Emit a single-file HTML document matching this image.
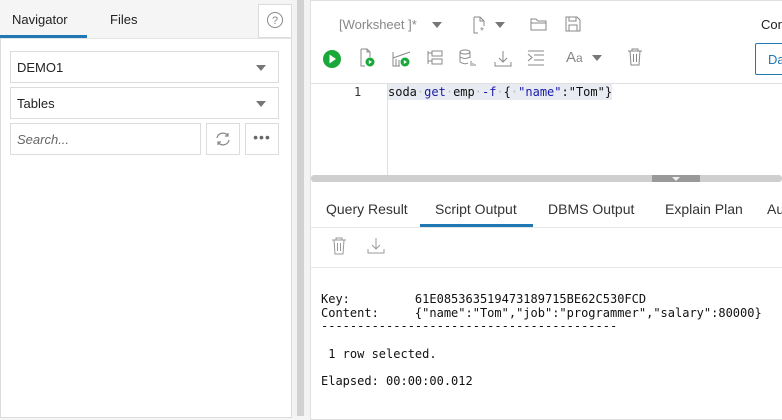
<!DOCTYPE html>
<html><head><style>
*{box-sizing:border-box;margin:0;padding:0}
body{width:782px;height:416px;overflow:hidden;background:#f5f5f5;font-family:"Liberation Sans",sans-serif;position:relative;color:#333}
.a{position:absolute}
.mono{font-family:"DejaVu Sans Mono",monospace;font-size:12px}
.box{position:absolute;background:#fff;border:1px solid #dcdcdc}
.sel{font-size:13px;color:#222;padding:8px 6px}
.tri{position:absolute;right:12px;top:13px;width:0;height:0;border-left:5px solid transparent;border-right:5px solid transparent;border-top:6px solid #777}
svg{position:absolute}
</style></head><body>
<!-- left -->
<div class="a" style="left:12px;top:12px;font-size:13px;color:#222">Navigator</div>
<div class="a" style="left:110px;top:12px;font-size:13px;color:#222">Files</div>
<div class="a" style="left:0;top:35px;width:87px;height:3px;background:#1f77b4"></div>
<div class="box" style="left:258px;top:4px;width:34px;height:34px"></div>
<svg style="left:266px;top:11px" width="18" height="18" viewBox="0 0 18 18"><circle cx="9" cy="9" r="7.5" fill="none" stroke="#888" stroke-width="1"/><text x="9" y="13" font-size="11" text-anchor="middle" fill="#888" font-family="Liberation Sans">?</text></svg>
<div class="box" style="left:0;top:38px;width:292px;height:380px;border-top:1px solid #e4e4e4"></div>
<div class="box sel" style="left:10px;top:51px;width:269px;height:32px">DEMO1<div class="tri"></div></div>
<div class="box sel" style="left:10px;top:87px;width:269px;height:32px">Tables<div class="tri"></div></div>
<div class="box sel" style="left:10px;top:123px;width:191px;height:32px;font-style:italic;color:#666">Search...</div>
<div class="box" style="left:206px;top:123px;width:34px;height:32px"></div>
<svg style="left:214px;top:131px" width="18" height="16" viewBox="0 0 18 16"><path d="M14 5 A6 6 0 0 0 3 7 M4 11 A6 6 0 0 0 15 9" fill="none" stroke="#888" stroke-width="1.2"/><path d="M14 2 V5 H11 M4 14 V11 H7" fill="none" stroke="#888" stroke-width="1.2"/></svg>
<div class="box" style="left:245px;top:123px;width:34px;height:32px;text-align:center;color:#666;font-size:14px;line-height:26px;letter-spacing:1px">•••</div>
<!-- splitter -->
<div class="a" style="left:292px;top:0;width:18px;height:416px;background:#f3f3f3"></div>
<div class="a" style="left:297px;top:0;width:7px;height:416px;background:#d2d2d2"></div>
<!-- right -->
<div class="box" style="left:310px;top:0;width:480px;height:420px;border-color:#e0e0e0"></div>
<div class="a" style="left:339px;top:17px;font-size:13px;color:#888">[Worksheet ]*</div>
<div class="a" style="left:432px;top:22px;border-left:5px solid transparent;border-right:5px solid transparent;border-top:6px solid #777"></div>
<svg style="left:472px;top:16px" width="16" height="18" viewBox="0 0 16 18"><path d="M2 1 H8 L12 5 V10 M2 1 V17 H6 M8 1 V5 H12" fill="none" stroke="#888"/><text x="8" y="18" font-size="10" fill="#888">*</text></svg>
<div class="a" style="left:495px;top:22px;border-left:5px solid transparent;border-right:5px solid transparent;border-top:6px solid #777"></div>
<svg style="left:530px;top:17px" width="18" height="14" viewBox="0 0 18 14"><path d="M1 2 H6 L8 4 H16 V13 H1 Z M1 6 H16" fill="none" stroke="#888"/></svg>
<svg style="left:565px;top:16px" width="16" height="16" viewBox="0 0 16 16"><path d="M1 1 H12 L15 4 V15 H1 Z M4 1 V5 H11 V1 M4 15 V9 H12 V15" fill="none" stroke="#888"/></svg>
<div class="a" style="left:761px;top:17px;font-size:13px;color:#222">Con</div>
<!-- icons row -->
<svg style="left:322px;top:49px" width="20" height="20"><circle cx="10" cy="10" r="9" fill="#1aa83a"/><path d="M7.5 5.5 L14 10 L7.5 14.5Z" fill="#fff"/></svg>
<svg style="left:359px;top:48px" width="18" height="20" viewBox="0 0 18 20"><path d="M2 1 H8 L11 4 V9 M2 1 V18 H6 M8 1 V4 H11" fill="none" stroke="#888"/><circle cx="11" cy="14" r="4.5" fill="#1aa83a"/><path d="M9.8 12 L13 14 L9.8 16Z" fill="#fff"/></svg>
<svg style="left:392px;top:50px" width="20" height="18" viewBox="0 0 20 18"><path d="M1 2 V16 H8 M1 8 L18 2 M4 16 V9 M7 16 V10" fill="none" stroke="#888"/><circle cx="13" cy="12" r="4.5" fill="#1aa83a"/><path d="M11.8 10 L15 12 L11.8 14Z" fill="#fff"/></svg>
<svg style="left:427px;top:50px" width="16" height="16" viewBox="0 0 16 16"><path d="M1 1 V14 M1 3 H5 M1 11 H5 M5 1 H15 V6 H5Z M5 9 H15 V14 H5Z" fill="none" stroke="#888"/></svg>
<svg style="left:459px;top:49px" width="18" height="18" viewBox="0 0 18 18"><ellipse cx="6" cy="3" rx="5" ry="2" fill="none" stroke="#888"/><path d="M1 3 V13 Q6 16 9 14 M11 3 V9 M1 8 Q6 11 11 8 M12 12 V17 M14 14 V17 M16 15 V17" fill="none" stroke="#888"/></svg>
<svg style="left:494px;top:50px" width="18" height="18" viewBox="0 0 18 18"><path d="M9 1 V12 M5 8 L9 12 L13 8 M1 12 V16 H17 V12" fill="none" stroke="#888"/></svg>
<svg style="left:527px;top:50px" width="18" height="16" viewBox="0 0 18 16"><path d="M1 1 H17 M7 5 H17 M7 10 H17 M1 15 H17 M1 4 L5 7.5 L1 11" fill="none" stroke="#888"/></svg>
<div class="a" style="left:566px;top:49px;font-size:15px;color:#888">A<span style="font-size:12px">a</span></div>
<div class="a" style="left:592px;top:55px;border-left:5px solid transparent;border-right:5px solid transparent;border-top:6px solid #777"></div>
<svg style="left:627px;top:48px" width="16" height="18" viewBox="0 0 16 18"><path d="M1 3 H15 M5 3 V1 H11 V3 M3 3 L4 17 H12 L13 3 M6.5 6 V14 M9.5 6 V14" fill="none" stroke="#888"/></svg>
<div class="a" style="left:755px;top:43px;width:40px;height:32px;border:1px solid #1f77b4;border-radius:2px;background:#fff;color:#1f77b4;font-size:13px;padding:8px 12px">Da</div>
<div class="a" style="left:311px;top:83px;width:471px;height:1px;background:#e0e0e0"></div>
<!-- editor -->
<div class="a" style="left:387px;top:84px;width:1px;height:91px;background:#e0e0e0"></div>
<div class="a mono" style="left:354px;top:85px;color:#333">1</div>
<div class="a" style="left:388px;top:84px;width:224px;height:16px;background:#e8ecf2"></div>
<div class="a mono" style="left:388px;top:85px;color:#111;white-space:pre">soda<span style="color:#bbb">·</span><span style="color:#1a1aa6">get</span><span style="color:#bbb">·</span>emp<span style="color:#bbb">·</span><span style="color:#1a1aa6">-f</span><span style="color:#bbb">·</span>{<span style="color:#bbb">·</span><span style="color:#1a1aa6">"name"</span>:"Tom"}</div>
<!-- h splitter -->
<div class="a" style="left:311px;top:175px;width:471px;height:7px;background:#cfcfcf;border-radius:3px"></div>
<div class="a" style="left:652px;top:175px;width:48px;height:7px;background:#999"></div>
<div class="a" style="left:672px;top:177px;border-left:4px solid transparent;border-right:4px solid transparent;border-top:4px solid #eee"></div>
<!-- tabs -->
<div class="a" style="left:326px;top:201px;font-size:14px;color:#333">Query Result</div>
<div class="a" style="left:435px;top:201px;font-size:14px;color:#333">Script Output</div>
<div class="a" style="left:548px;top:201px;font-size:14px;color:#333">DBMS Output</div>
<div class="a" style="left:665px;top:201px;font-size:14px;color:#333">Explain Plan</div>
<div class="a" style="left:767px;top:201px;font-size:14px;color:#333">Au</div>
<div class="a" style="left:420px;top:224px;width:113px;height:3px;background:#1f77b4"></div>
<div class="a" style="left:311px;top:227px;width:471px;height:1px;background:#e6e6e6"></div>
<svg style="left:331px;top:237px" width="16" height="18" viewBox="0 0 16 18"><path d="M1 3 H15 M5 3 V1 H11 V3 M3 3 L4 17 H12 L13 3 M6.5 6 V14 M9.5 6 V14" fill="none" stroke="#999"/></svg>
<svg style="left:367px;top:237px" width="18" height="18" viewBox="0 0 18 18"><path d="M9 1 V12 M5 8 L9 12 L13 8 M1 12 V16 H17 V12" fill="none" stroke="#999"/></svg>
<div class="a" style="left:311px;top:267px;width:471px;height:150px;background:#fff;border-top:1px solid #e6e6e6"></div>
<pre class="a mono" style="left:321px;top:293px;line-height:13.7px;color:#111">Key:         61E085363519473189715BE62C530FCD
Content:     {"name":"Tom","job":"programmer","salary":80000}
-----------------------------------------

 1 row selected.

Elapsed: 00:00:00.012</pre>
</body></html>
